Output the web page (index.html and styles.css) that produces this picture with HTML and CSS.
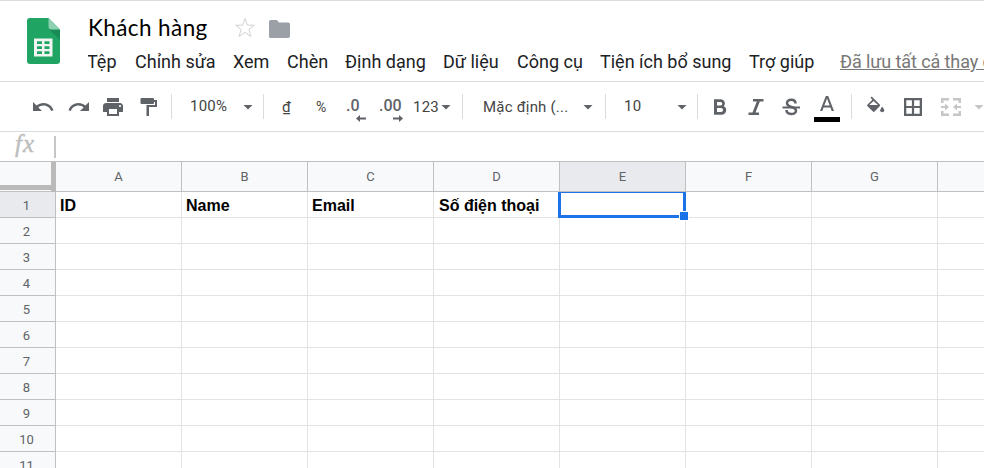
FILE: index.html
```html
<!DOCTYPE html>
<html lang="vi">
<head>
<meta charset="utf-8">
<title>Khách hàng</title>
<link rel="stylesheet" href="styles.css">
</head>
<body>
<header class="header">
  <svg class="logo" width="33" height="46" viewBox="0 0 33 46">
    <path fill="#1fa463" d="M3 0H21.500L33 11.500V43a3 3 0 0 1-3 3H3a3 3 0 0 1-3-3V3a3 3 0 0 1 3-3z"/>
    <path fill="#188c54" d="M22 11.500H33V22z"/>
    <path fill="#8ed1b1" d="M21.500 0L33 11.500H24.500a3 3 0 0 1-3-3z"/>
    <path fill="#f1f5f2" fill-rule="evenodd" d="M7 20.500H25.500V38.500H7zM10 23.300v2.700h5v-2.700zM17.500 23.300v2.700h5v-2.700zM10 28.200v2.700h5v-2.700zM17.500 28.200v2.700h5v-2.700zM10 33.200v2.700h5v-2.700zM17.500 33.200v2.700h5v-2.700z"/>
  </svg>
  <div class="heading">
    <div class="title-row">
      <span class="title">Khách hàng</span>
      <svg class="star" width="22" height="22" viewBox="0 0 22 22"><path fill="none" stroke="#d0d2d4" d="M11 1.500L13.400 8.200H20.300L14.900 12.500L16.900 19.500L11 15.400L5.100 19.500L7.100 12.500L1.700 8.200H8.600z"/></svg>
      <svg class="folder" width="21" height="18" viewBox="0 0 21 18"><path fill="#9aa0a6" d="M1.800 0H8L10 2.500H19.200A1.800 1.800 0 0 1 21 4.300V16A2 2 0 0 1 19.200 18H1.800A1.800 1.800 0 0 1 0 16V1.800A1.800 1.800 0 0 1 1.800 0z"/></svg>
    </div>
    <nav class="menu">
      <span class="m1">Tệp</span><span class="m2">Chỉnh sửa</span><span class="m3">Xem</span><span class="m4">Chèn</span><span class="m5">Định dạng</span><span class="m6">Dữ liệu</span><span class="m7">Công cụ</span><span class="m8">Tiện ích bổ sung</span><span class="m9">Trợ giúp</span><span class="saved">Đã lưu tất cả thay đổi</span>
    </nav>
  </div>
</header>

<div class="toolbar">
  <svg class="icon undo" viewBox="0 0 24 24"><path d="M12.500 8c-2.650 0-5.050.990-6.900 2.600L2 7v9h9l-3.620-3.620c1.390-1.160 3.160-1.880 5.120-1.880 3.540 0 6.550 2.310 7.600 5.500l2.370-.780C21.080 11.030 17.150 8 12.500 8z"/></svg>
  <svg class="icon redo" viewBox="0 0 24 24"><path d="M18.400 10.600C16.550 8.990 14.150 8 11.500 8c-4.650 0-8.580 3.030-9.960 7.220L3.900 16c1.050-3.190 4.050-5.500 7.600-5.500 1.950 0 3.730.720 5.120 1.880L13 16h9V7l-3.600 3.600z"/></svg>
  <svg class="icon print" viewBox="0 0 24 24"><path d="M19 8H5c-1.660 0-3 1.340-3 3v6h4v4h12v-4h4v-6c0-1.660-1.340-3-3-3zm-3 11H8v-5h8v5zm3-7c-.550 0-1-.450-1-1s.450-1 1-1 1 .450 1 1-.450 1-1 1zm-1-9H6v4h12V3z"/></svg>
  <svg class="icon paint" viewBox="0 0 24 24"><path d="M4.500 3h11.500a1 1 0 0 1 1 1v1h3v7h-8v9H9.500v-11h8.500V7h-1v1a1 1 0 0 1-1 1h-11.500a1 1 0 0 1-1-1V4a1 1 0 0 1 1-1z"/></svg>
  <i class="sep s1"></i>
  <span class="label zoom">100%</span><i class="caret c1"></i>
  <i class="sep s2"></i>
  <span class="label dong">₫</span>
  <span class="label percent">%</span>
  <span class="decimal less">.0<svg width="10" height="7" viewBox="0 0 10 7"><path d="M0 3.500L4 0V2.500H10V4.500H4V7z"/></svg></span>
  <span class="decimal more">.00<svg width="10" height="7" viewBox="0 0 10 7"><path d="M10 3.500L6 0V2.500H0V4.500H6V7z"/></svg></span>
  <span class="label format">123</span><i class="caret c2"></i>
  <i class="sep s3"></i>
  <span class="label font">Mặc định (...</span><i class="caret c3"></i>
  <i class="sep s4"></i>
  <span class="label size">10</span><i class="caret c4"></i>
  <i class="sep s5"></i>
  <svg class="icon bold" viewBox="0 0 24 24"><path fill-rule="evenodd" d="M6 4.300h7a4.200 4.200 0 0 1 2.900 7A4.500 4.500 0 0 1 13.700 19.700H6zM9 6.900v3.500h3.500a1.750 1.750 0 0 0 0-3.500zM9 13v4h4a2 2 0 0 0 0-4z"/></svg>
  <svg class="icon italic" viewBox="0 0 24 24"><path d="M9 4H19.500V6.500H15.800L11.500 17.500H15V20H4.500V17.500H8.500L12.800 6.500H9z"/></svg>
  <svg class="icon strike" viewBox="0 0 24 24"><path d="M3.500 11.500h17.500v2H3.500z"/><path class="line" d="M16.500 8.500C16.500 3.500 8 3.700 8 8c0 2.500 2 3.300 4.500 4 3 .8 4.500 1.700 4.500 3.800 0 4.300-9.500 4.400-9.500-.8"/></svg>
  <span class="text-color"><svg width="16" height="16" viewBox="0 0 16 16"><path fill-rule="evenodd" d="M6.800 0H9.200L15 15H12.700L11.400 11.500H4.600L3.300 15H1zM5.300 9.500H10.700L8 2.400z"/></svg></span>
  <i class="sep s6"></i>
  <svg class="icon fill" viewBox="0 0 24 24"><path fill-rule="evenodd" d="M7.500 2.800L8.700 1.600L16.700 9.600a1.200 1.200 0 0 1 0 1.700L11.600 16.600a1.200 1.200 0 0 1-1.700 0L4.500 11.300a1.200 1.200 0 0 1 0-1.700L9.400 4.700zM6.300 10.100H14.900L10.600 5.900z"/><path d="M19.200 11.700s-2 2.200-2 3.500a2 2 0 0 0 4 0c0-1.300-2-3.500-2-3.500z"/></svg>
  <svg class="icon borders" viewBox="0 0 24 24"><path fill-rule="evenodd" d="M3 3H21V21H3zM5.300 5.300V10.900H10.900V5.300zM13.100 5.300V10.900H18.700V5.300zM5.300 13.100V18.700H10.900V13.100zM13.100 13.100V18.700H18.700V13.100z"/></svg>
  <svg class="icon merge" viewBox="0 0 24 24"><path d="M2 3H10V5.500H4.500V8H2zM14 3H22V8H19.500V5.500H14zM2 16H4.500V18.500H10V21H2zM19.500 16H22V21H14V18.500H19.500zM2 11H6V8.500L10 12L6 15.500V13H2zM22 11H18V8.500L14 12L18 15.500V13H22z"/></svg>
  <i class="caret c5"></i>
</div>

<div class="formula"><span class="fx">fx</span><i class="fx-line"></i></div>

<table class="sheet">
  <colgroup><col class="col-num"><col><col><col><col><col><col><col><col></colgroup>
  <thead>
    <tr><th class="corner"></th><th>A</th><th>B</th><th>C</th><th>D</th><th class="active">E</th><th>F</th><th>G</th><th></th></tr>
  </thead>
  <tbody>
    <tr><th class="active">1</th><td>ID</td><td>Name</td><td>Email</td><td class="phone">Số điện thoại</td><td class="selected"><div class="selection"><i class="handle"></i></div></td><td></td><td></td><td></td></tr>
    <tr><th>2</th><td></td><td></td><td></td><td></td><td></td><td></td><td></td><td></td></tr>
    <tr><th>3</th><td></td><td></td><td></td><td></td><td></td><td></td><td></td><td></td></tr>
    <tr><th>4</th><td></td><td></td><td></td><td></td><td></td><td></td><td></td><td></td></tr>
    <tr><th>5</th><td></td><td></td><td></td><td></td><td></td><td></td><td></td><td></td></tr>
    <tr><th>6</th><td></td><td></td><td></td><td></td><td></td><td></td><td></td><td></td></tr>
    <tr><th>7</th><td></td><td></td><td></td><td></td><td></td><td></td><td></td><td></td></tr>
    <tr><th>8</th><td></td><td></td><td></td><td></td><td></td><td></td><td></td><td></td></tr>
    <tr><th>9</th><td></td><td></td><td></td><td></td><td></td><td></td><td></td><td></td></tr>
    <tr><th>10</th><td></td><td></td><td></td><td></td><td></td><td></td><td></td><td></td></tr>
    <tr><th>11</th><td></td><td></td><td></td><td></td><td></td><td></td><td></td><td></td></tr>
  </tbody>
</table>
</body>
</html>
```
FILE: styles.css
```css
* { box-sizing: border-box; }
html { overflow: hidden; }
body {
  margin: 0;
  width: 984px;
  height: 468px;
  overflow: hidden;
  background: #fff;
  color: #202124;
  font-family: Roboto, "Liberation Sans", sans-serif;
}
svg { display: block; flex: none; }

.header {
  display: flex;
  height: 82px;
  border-top: 1px solid #dadce0;
  border-bottom: 1px solid #dadce0;
}
.logo { margin: 17px 28px 0 27px; }
.heading { flex: 1; min-width: 0; }
.title-row { display: flex; height: 46px; padding-top: 11px; }
.title {
  width: 146px;
  font: 22.5px/32px Lato, sans-serif;
  letter-spacing: 0.4px;
  color: #000;
  white-space: nowrap;
}
.star { margin-top: 5px; }
.folder { margin: 8px 0 0 13px; }
.menu { display: flex; height: 30px; overflow: hidden; font-size: 18px; line-height: 30px; white-space: nowrap; }
.menu span { flex: none; }
.m1 { width: 47px; }
.m2 { width: 98px; }
.m3 { width: 54px; }
.m4 { width: 58px; }
.m5 { width: 98px; }
.m6 { width: 74px; }
.m7 { width: 83px; }
.m8 { width: 149px; }
.m9 { width: 91px; }
.menu .m1 { margin-left: -1px; width: 48px; }
.saved { color: #777; text-decoration: underline; letter-spacing: -0.1px; }

.toolbar {
  display: flex;
  align-items: center;
  height: 50px;
  border-bottom: 1px solid #dadce0;
  overflow: hidden;
}
.icon { width: 24px; height: 24px; fill: #5f6368; }
.undo { margin-left: 31px; }
.redo { margin-left: 12px; }
.print { margin-left: 10px; }
.paint { margin-left: 12px; }
.sep { flex: none; width: 1px; height: 25px; background: #dadce0; }
.s1 { margin-left: 10px; }
.label {
  flex: none;
  font-size: 15px;
  line-height: 24px;
  color: #444;
  letter-spacing: 0.2px;
  white-space: nowrap;
}
.zoom { width: 53px; margin-left: 18px; margin-top: -2px; }
.caret { flex: none; width: 10px; height: 5px; margin-top: 1px; background: #5f6368; clip-path: polygon(0 0, 100% 0, 50% 100%); }
.s2 { margin-left: 10px; }
.dong { width: 34px; margin-left: 18px; }
.percent { width: 30px; font-size: 14px; }
.decimal {
  flex: none;
  height: 26px;
  font-weight: 500;
  font-size: 16px;
  line-height: 24px;
  color: #5f6368;
}
.decimal svg { margin: -3px 0 0 auto; fill: #5f6368; }
.less { width: 20px; }
.more { width: 24px; margin-left: 13px; }
.format { width: 28px; margin-left: 10px; }
.s3 { margin-left: 11px; }
.font { width: 100px; margin-left: 20px; }
.s4 { margin-left: 12px; }
.size { width: 53px; margin-left: 18px; margin-top: -2px; }
.s5 { margin-left: 10px; }
.bold { margin-left: 10px; }
.italic { margin-left: 12px; }
.strike { margin-left: 11px; }
.strike .line { fill: none; stroke: #5f6368; stroke-width: 2.5; }
.text-color {
  flex: none;
  width: 26px;
  height: 26px;
  margin: 4px 0 0 11px;
  padding-left: 5px;
  border-bottom: 5px solid #000;
}
.text-color svg { fill: #5f6368; }
.s6 { margin-left: 11px; }
.fill { margin-left: 11px; }
.borders { margin-left: 14px; }
.merge { margin-left: 14px; fill: #c4c6c8; }
.c5 { margin-left: 11px; background: #c4c6c8; }

.formula { display: flex; align-items: center; height: 29px; }
.fx {
  width: 39px;
  margin: -5px 0 0 15px;
  font: italic 25px/28px "Liberation Serif", serif;
  letter-spacing: 1px;
  color: #bdbdbd;
  -webkit-text-stroke: 0.4px #bdbdbd;
}
.fx-line { width: 2px; height: 22px; background: #c6c6c6; }

.sheet { width: 1064px; table-layout: fixed; border-collapse: separate; border-spacing: 0; }
.sheet col { width: 126px; }
.sheet .col-num { width: 56px; }
.sheet th, .sheet td { height: 26px; padding: 0; border: solid #e2e3e3; border-width: 0 1px 1px 0; }
.sheet th { background: #f8f9fa; border-color: #c0c0c0; font-size: 13px; font-weight: 400; line-height: 20px; color: #5f6368; }
.sheet tbody th { padding: 2px 2px 0 0; }
.sheet thead th { height: 31px; border-top: 1px solid #c0c0c0; }
.sheet th.active { background: #e8eaed; }
.sheet thead .corner { border-right: 5px solid #bababa; box-shadow: inset 0 -1px #f8f9fa, inset 0 -6px #bababa; }
.sheet td {
  padding: 2px 0 0 4px;
  font: bold 16px/23px "Liberation Sans", sans-serif;
  color: #000;
  white-space: nowrap;
}
.sheet .phone { padding-left: 5px; }
.sheet td.selected { position: relative; padding: 0; }
.selection { position: absolute; top: 0; left: -2px; width: 128px; height: 26px; border: 3px solid #1a73e8; border-top-width: 1px; }
.handle { position: absolute; right: -6px; bottom: -6px; width: 10px; height: 10px; background: #1a73e8; border: 1px solid #fff; }
```
